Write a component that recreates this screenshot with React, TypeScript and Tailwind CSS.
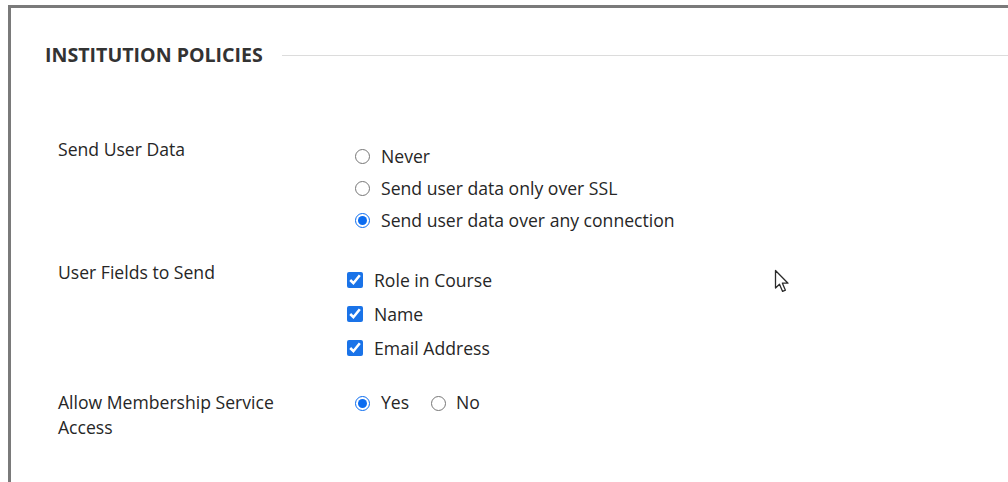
import React from 'react';

const font = { fontFamily: '"Open Sans", "Noto Sans", sans-serif' };

function Radio({ checked, name, low }: { checked?: boolean; name: string; low?: boolean }) {
  return (
    <input
      type="radio"
      name={name}
      defaultChecked={checked}
      className={
        low
          ? 'm-0 mt-[6px] h-[15px] w-[15px] shrink-0 accent-[#0b6cf0]'
          : 'm-0 mt-[1px] h-[15px] w-[15px] shrink-0 accent-[#0b6cf0]'
      }
    />
  );
}

function Check() {
  return (
    <input
      type="checkbox"
      defaultChecked
      className="m-0 h-[16px] w-[16px] shrink-0 accent-[#1a73e8]"
    />
  );
}

function PointerCursor() {
  return (
    <svg
      className="pointer-events-none absolute left-[773px] top-[268px]"
      width="20"
      height="28"
      viewBox="0 0 20 28"
    >
      <path
        d="M2.5 2.5 L2.5 20 L6.5 16.2 L9.6 23.4 L12.4 22.2 L9.4 15.2 L15 15.2 Z"
        fill="#fff"
        stroke="#2b2b2b"
        strokeWidth="1.3"
        strokeLinejoin="round"
      />
    </svg>
  );
}

export default function App() {
  return (
    <div className="relative h-[482px] w-[1008px] overflow-hidden bg-white text-[#262626]" style={font}>
      <div className="ml-[8px] mt-[5px] h-[477px] border-l-[3px] border-t-[3px] border-[#7a7a7a] pl-[34px] pt-[34px]">
        {/* section title with rule */}
        <div className="flex items-center gap-[19px]">
          <h2 className="text-[19.6px] font-bold uppercase leading-[26px] text-[#333]">
            Institution Policies
          </h2>
          <div className="h-px flex-1 bg-[#dcdcdc]" />
        </div>

        <div className="mt-[69px] pl-[13px] text-[17.6px] leading-[24px]">
          <div className="flex">
            <div className="w-[289px]">Send User Data</div>
            <div className="mt-[7px] flex flex-col gap-[8px] pl-[8px]">
              <label className="flex items-center gap-[11px]">
                <Radio name="send" />
                <span>Never</span>
              </label>
              <label className="flex items-center gap-[11px]">
                <Radio name="send" />
                <span>Send user data only over SSL</span>
              </label>
              <label className="flex items-center gap-[11px]">
                <Radio name="send" checked />
                <span>Send user data over any connection</span>
              </label>
            </div>
          </div>

          <div className="mt-[28px] flex">
            <div className="w-[289px]">User Fields to Send</div>
            <div className="mt-[8px] flex flex-col gap-[10px]">
              <label className="flex items-center gap-[11px]">
                <Check />
                <span>Role in Course</span>
              </label>
              <label className="flex items-center gap-[11px]">
                <Check />
                <span>Name</span>
              </label>
              <label className="flex items-center gap-[11px]">
                <Check />
                <span>Email Address</span>
              </label>
            </div>
          </div>

          <div className="mt-[30px] flex items-start">
            <div className="w-[289px] pr-[40px] leading-[25px]">Allow Membership Service Access</div>
            <div className="flex items-start gap-[11px] pl-[8px]">
              <label className="flex items-start gap-[11px]">
                <Radio name="member" checked low />
                <span>Yes</span>
              </label>
              <label className="ml-[11px] flex items-start gap-[10px]">
                <Radio name="member" low />
                <span>No</span>
              </label>
            </div>
          </div>
        </div>
      </div>
      <PointerCursor />
    </div>
  );
}
